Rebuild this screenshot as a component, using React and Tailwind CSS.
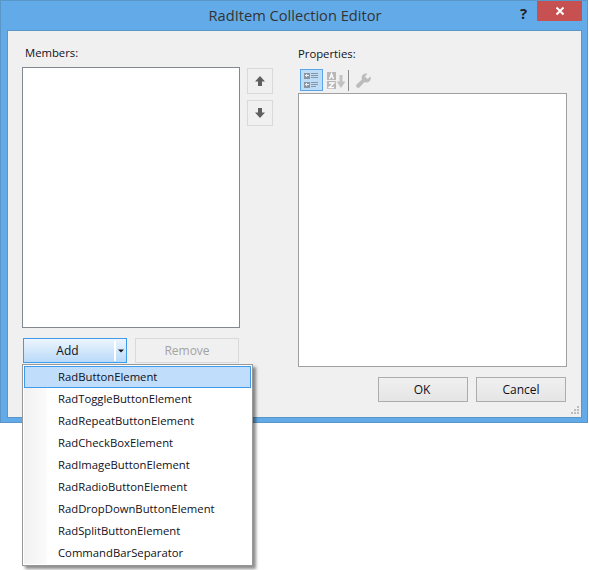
const items = [
  "RadButtonElement",
  "RadToggleButtonElement",
  "RadRepeatButtonElement",
  "RadCheckBoxElement",
  "RadImageButtonElement",
  "RadRadioButtonElement",
  "RadDropDownButtonElement",
  "RadSplitButtonElement",
  "CommandBarSeparator",
];

function ArrowBtn({ down }) {
  return (
    <div className="w-[26px] h-[26px] border border-[#d9d9d9] flex items-center justify-center">
      <svg width="12" height="12" viewBox="0 0 12 12" className={down ? "rotate-180" : ""}>
        <path d="M6 1 L11 6.5 H8 V11 H4 V6.5 H1 Z" fill="#5f5f5f" />
      </svg>
    </div>
  );
}

function CategorizedIcon() {
  return (
    <svg width="15" height="15" viewBox="0 0 15 15" shapeRendering="crispEdges">
      <rect x="0" y="0" width="6" height="6" fill="#8a95a0" />
      <rect x="0" y="9" width="6" height="6" fill="#8a95a0" />
      <path d="M1 2h4v1H1zM2 1h1v3H2zM1 11h4v1H1zM2 10h1v3H2z" fill="#e6edf4" />
      <path d="M7 0h7v1H7zM7 2h7v1H7zM7 4h7v1H7zM7 9h7v1H7zM7 11h7v1H7zM7 13h5v1H7z" fill="#8a95a0" />
    </svg>
  );
}

function AlphaIcon() {
  return (
    <svg width="19" height="17" viewBox="0 0 19 17">
      <rect x="0" y="0" width="9" height="8" fill="#b8b8b8" />
      <rect x="0" y="9" width="9" height="8" fill="#b8b8b8" />
      <path d="M2.5 7l2-5.5 2 5.5M3.3 5h2.4" stroke="#fff" strokeWidth="1.2" fill="none" />
      <path d="M2 11h5L2 15.5h5" stroke="#fff" strokeWidth="1.3" fill="none" />
      <path d="M14 3v9" stroke="#c2c2c2" strokeWidth="3" />
      <path d="M9.5 9.5h9L14 16z" fill="#c2c2c2" />
    </svg>
  );
}

function WrenchIcon() {
  return (
    <svg width="15" height="15" viewBox="0 0 15 15">
      <path d="M14.5 3.5 L11.5 6 L9 3.5 L11.5 0.8 A4.3 4.3 0 0 0 6 6.5 L0.8 11.3 A2 2 0 0 0 3.6 14.2 L8.6 9 A4.3 4.3 0 0 0 14.5 3.5 Z" fill="#bcbcbc" />
    </svg>
  );
}

export default function App() {
  return (
    <div className="font-['Open_Sans',sans-serif] w-[589px] h-[570px] bg-white text-[11.3px] text-[#101020] overflow-hidden relative">
      <div className="w-[588px] h-[423px] bg-[#63abe8] border border-[#5a96c8] flex flex-col">
        <div className="h-[29px] relative flex items-center justify-center shrink-0">
          <span className="text-[14.65px] text-[#333] pt-[1px] pl-[2px]">RadItem Collection Editor</span>
          <span className="absolute left-[519px] top-[1px] text-[15px] font-bold text-[#222]">?</span>
          <div className="absolute left-[536px] top-0 w-[45px] h-[20px] bg-[#c75050] flex items-center justify-center">
            <svg width="10" height="10" viewBox="0 0 10 10">
              <path d="M1.5 1.5 L8.5 8.5 M8.5 1.5 L1.5 8.5" stroke="#fff" strokeWidth="2" />
            </svg>
          </div>
        </div>
        <div className="ml-[6px] mr-[5px] h-[388px] bg-[#f0f0f0] border border-[#5a96c8] flex relative">
          <div className="ml-[14px] w-[218px] flex flex-col">
            <div className="h-[36px] pt-[14px] pl-[3px] leading-[16px]">Members:</div>
            <div className="h-[261px] bg-white border border-[#828790]" />
            <div className="mt-[10px] flex gap-[8px]">
              <div className="ml-[1px] w-[104px] h-[25px] border border-[#3d9be9] bg-gradient-to-b from-[#edf5fd] to-[#b9daf9] flex items-center">
                <span className="w-[88px] pr-[1px] text-center text-[12px]">Add</span>
                <div className="ml-[2px] w-[2px] h-[20px] bg-white" />
                <svg width="10" height="6" viewBox="0 0 10 6">
                  <path d="M2 1.5 H8 L5 4.5 Z" fill="#1a1a1a" />
                </svg>
              </div>
              <div className="w-[104px] h-[25px] border border-[#d9d9d9] flex items-center justify-center text-[#a3a3a3] text-[12px]">
                Remove
              </div>
            </div>
          </div>
          <div className="ml-[7px] mt-[37px] flex flex-col gap-[6px]">
            <ArrowBtn />
            <ArrowBtn down />
          </div>
          <div className="ml-[25px] flex-1 flex flex-col pr-[14px]">
            <div className="h-[38px] pt-[15px] leading-[16px]">Properties:</div>
            <div className="h-[22px] flex items-center pl-[2px]">
              <div className="w-[23px] h-[22px] bg-[#bcdcf8] border border-[#5aa5ea] flex items-center justify-center">
                <CategorizedIcon />
              </div>
              <div className="w-[25px] pl-[2px] flex justify-center"><AlphaIcon /></div>
              <div className="w-[1px] h-[21px] bg-[#8a8a8a]" />
              <div className="ml-[7px] flex justify-center"><WrenchIcon /></div>
            </div>
            <div className="mt-[2px] h-[274px] bg-white border border-[#a0a0a0]" />
            <div className="mt-[10px] flex gap-[8px] justify-end pr-[1px]">
              <button className="w-[90px] h-[25px] pr-[2px] border border-[#acacac] bg-gradient-to-b from-[#f0f0f0] to-[#e5e5e5] text-[12px]">OK</button>
              <button className="w-[90px] h-[25px] border border-[#acacac] bg-gradient-to-b from-[#f0f0f0] to-[#e5e5e5] text-[12px]">Cancel</button>
            </div>
          </div>
          <svg className="absolute right-[2px] bottom-[3px]" width="8" height="8" viewBox="0 0 8 8">
            <path d="M6 0h2v2H6zM3 3h2v2H3zM6 3h2v2H6zM0 6h2v2H0zM3 6h2v2H3zM6 6h2v2H6z" fill="#bdbdbd" />
          </svg>
        </div>
      </div>
      <div className="absolute left-[22px] top-[364px] w-[231px] h-[202px] bg-white border border-[#979797] shadow-[3px_3px_3px_rgba(0,0,0,0.45)] flex flex-col p-[1px]">
        <div className="absolute left-[1px] top-[1px] bottom-[1px] w-[23px] bg-gradient-to-r from-[#f1f1f1] to-[#fbfbfb]" />
        {items.map((t, i) => (
          <div key={t} className={`relative h-[22px] ${i === 0 ? "bg-[#c0ddfb] border border-[#3d9be9] leading-[20px] pl-[33px]" : "leading-[22px] pl-[34px]"}`}>
            {t}
          </div>
        ))}
      </div>
    </div>
  );
}
